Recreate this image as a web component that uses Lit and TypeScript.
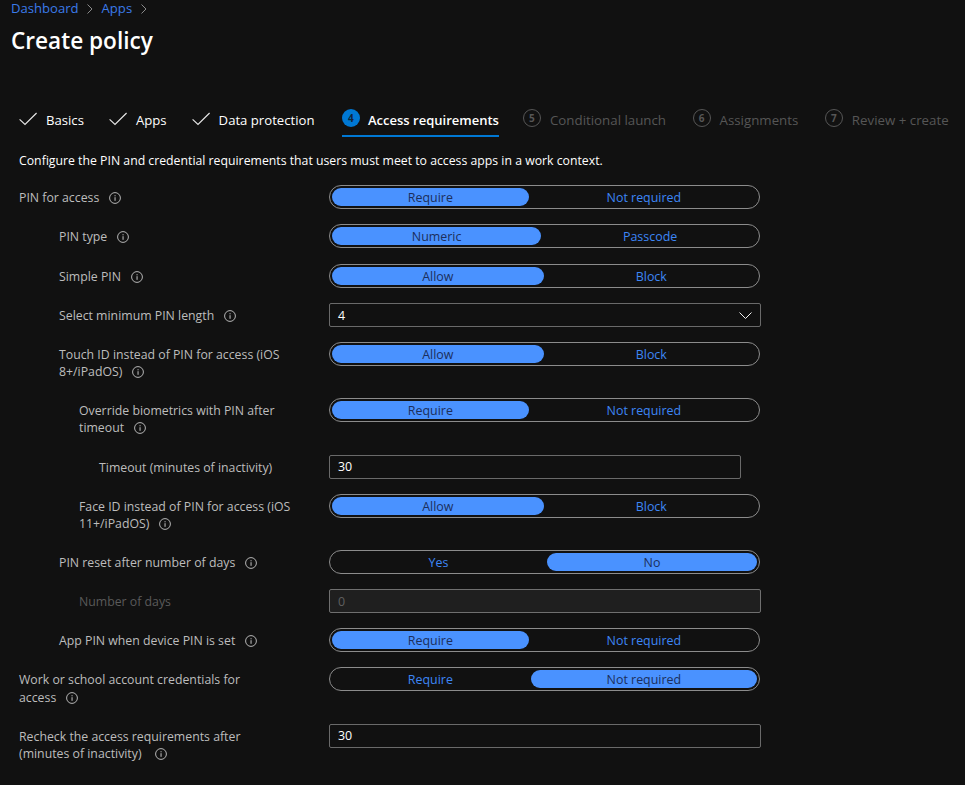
import { LitElement, html, css, svg } from "lit";
import { customElement } from "lit/decorators.js";
import { classMap } from "lit/directives/class-map.js";

type Row = {
  label: string;
  level: 0 | 1 | 2 | 3;
  kind: "toggle" | "select" | "input" | "disabled";
  options?: [string, string];
  selected?: number;
  value?: string;
  narrow?: boolean;
  wideIcon?: boolean;
  noIcon?: boolean;
  two?: boolean;
};

const REQ: [string, string] = ["Require", "Not required"];
const ALLOW: [string, string] = ["Allow", "Block"];

const rows: Row[] = [
  { label: "PIN for access", level: 0, kind: "toggle", options: REQ, selected: 0 },
  { label: "PIN type", level: 1, kind: "toggle", options: ["Numeric", "Passcode"], selected: 0 },
  { label: "Simple PIN", level: 1, kind: "toggle", options: ALLOW, selected: 0 },
  { label: "Select minimum PIN length", level: 1, kind: "select", value: "4" },
  { label: "Touch ID instead of PIN for access (iOS 8+/iPadOS)", level: 1, kind: "toggle", options: ALLOW, selected: 0, two: true },
  { label: "Override biometrics with PIN after timeout", level: 2, kind: "toggle", options: REQ, selected: 0, two: true },
  { label: "Timeout (minutes of inactivity)", level: 3, kind: "input", value: "30", narrow: true, noIcon: true },
  { label: "Face ID instead of PIN for access (iOS 11+/iPadOS)", level: 2, kind: "toggle", options: ALLOW, selected: 0, two: true },
  { label: "PIN reset after number of days", level: 1, kind: "toggle", options: ["Yes", "No"], selected: 1 },
  { label: "Number of days", level: 2, kind: "disabled", value: "0", noIcon: true },
  { label: "App PIN when device PIN is set", level: 1, kind: "toggle", options: REQ, selected: 0 },
  { label: "Work or school account credentials for access", level: 0, kind: "toggle", options: REQ, selected: 1, two: true },
  { label: "Recheck the access requirements after (minutes of inactivity)", level: 0, kind: "input", value: "30", wideIcon: true, two: true },
];

type Tab = { label: string; state: "done" | "active" | "todo"; n?: number };
const tabs: Tab[] = [
  { label: "Basics", state: "done" },
  { label: "Apps", state: "done" },
  { label: "Data protection", state: "done" },
  { label: "Access requirements", state: "active", n: 4 },
  { label: "Conditional launch", state: "todo", n: 5 },
  { label: "Assignments", state: "todo", n: 6 },
  { label: "Review + create", state: "todo", n: 7 },
];

const infoIcon = svg`<circle cx="6" cy="6" r="5.4" fill="none" stroke="currentColor" stroke-width="1"/><rect x="5.5" y="5.2" width="1.1" height="3.6" fill="currentColor"/><rect x="5.5" y="3.2" width="1.1" height="1.1" fill="currentColor"/>`;
const checkIcon = svg`<path d="M0.6 7.4 L6 12.4 L17.6 1" fill="none" stroke="currentColor" stroke-width="1.2"/>`;
const chevron = svg`<path d="M0.5 0.5 L6.5 6.5 L12.5 0.5" fill="none" stroke="currentColor" stroke-width="1"/>`;
const crumbChevron = svg`<path d="M0.5 0.5 L5 5 L0.5 9.5" fill="none" stroke="currentColor" stroke-width="1"/>`;

@customElement("app-root")
export class AppRoot extends LitElement {
  static styles = css`
    :host {
      display: block;
      height: 785px;
      overflow: hidden;
      background: #111111;
      color: #ffffff;
      font-family: "Open Sans", "Noto Sans", sans-serif;
    }
    .crumbs {
      display: flex;
      align-items: center;
      gap: 8.5px;
      height: 16px;
      padding-left: 11px;
      font-size: 13.1px;
      line-height: 16px;
      color: #3b7bea;
    }
    .crumbs svg {
      width: 6px;
      height: 10px;
      color: #8a8a8a;
      margin-top: 1px;
    }
    h1 {
      margin: 9px 0 0;
      padding-left: 11px;
      font-size: 22.6px;
      line-height: 32px;
      font-weight: 600;
      color: #ffffff;
    }
    .tabs {
      display: flex;
      margin-top: 53px;
      padding-left: 19px;
      height: 27px;
      white-space: nowrap;
    }
    .tab {
      display: flex;
      gap: 9px;
      height: 27px;
      box-sizing: border-box;
      font-size: 13.15px;
      line-height: 20px;
      margin-right: 25px;
    }
    .tab.done svg {
      width: 18px;
      height: 14px;
      margin-top: 2px;
      color: #e6e6e6;
    }
    .tab.active {
      margin-left: 2.5px;
      margin-right: 24px;
      border-bottom: 2px solid #0078d4;
      gap: 8px;
    }
    .tab.active .text {
      font-weight: 600;
      font-size: 13.02px;
    }
    .tab.todo {
      color: #565656;
      font-size: 13.3px;
      margin-right: 26.5px;
    }
    .badge {
      box-sizing: border-box;
      width: 18px;
      height: 18px;
      border-radius: 50%;
      display: flex;
      align-items: center;
      justify-content: center;
      font-size: 10px;
      line-height: 18px;
      font-weight: 700;
      margin-top: -1px;
    }
    .active .badge {
      background: #0078d4;
      color: #10243a;
    }
    .todo .badge {
      border: 1px solid #565656;
      color: #565656;
    }
    .desc {
      margin: 15px 0 0 19px;
      font-size: 12.27px;
      line-height: 17px;
      color: #ffffff;
      white-space: nowrap;
    }
    .form {
      display: flex;
      flex-direction: column;
      gap: 15px;
      margin-top: 16.35px;
      padding-left: 19px;
      width: 742px;
      box-sizing: border-box;
    }
    .row {
      display: grid;
      grid-template-columns: 310px 432px;
      align-items: start;
      flex: none;
      height: 24.1px;
    }
    .row.two {
      height: 41.4px;
    }
    .label {
      box-sizing: border-box;
      padding-top: 4px;
      font-size: 12.3px;
      line-height: 17.3px;
      color: #bdbdbd;
    }
    .label .inner {
      max-width: 225px;
    }
    .l1 { padding-left: 40px; }
    .l2 { padding-left: 60px; }
    .l3 { padding-left: 80px; }
    .l3 .inner { max-width: none; }
    .label.off { color: #5a5a5a; }
    .info {
      display: inline-block;
      width: 12px;
      height: 12px;
      margin-left: 9.5px;
      vertical-align: -2px;
      color: #b5b5b5;
    }
    .info.wide { margin-left: 13px; }
    .toggle {
      display: flex;
      gap: 2px;
      box-sizing: border-box;
      width: 431px;
      height: 24px;
      padding: 2px;
      border: 1px solid #8c8c8c;
      border-radius: 12px;
    }
    .seg {
      flex: 1 1 auto;
      height: 18px;
      border-radius: 9px;
      text-align: center;
      font-size: 12.44px;
      line-height: 20px;
      color: #3d86f5;
    }
    .seg.on {
      background: #4a92ff;
      color: #1c2f5c;
    }
    .field {
      display: flex;
      align-items: center;
      justify-content: space-between;
      box-sizing: border-box;
      width: 432px;
      height: 24px;
      padding: 0 8px;
      border: 1px solid #6a6a6a;
      border-radius: 2px;
      font-size: 12.44px;
      color: #ffffff;
    }
    .field.pad { padding-top: 1px; }
    .field.narrow { width: 412px; }
    .field.off {
      background: #1f1f1f;
      color: #5f5f5f;
      border-color: #6f6f6f;
    }
    .field svg {
      width: 13px;
      height: 7px;
      color: #f0f0f0;
    }
  `;

  private control(r: Row) {
    if (r.kind === "toggle") {
      return html`<div class="toggle">
        ${r.options!.map(
          (o, i) => html`<div class=${classMap({ seg: true, on: i === r.selected })}>${o}</div>`
        )}
      </div>`;
    }
    return html`<div
      class=${classMap({
        field: true,
        narrow: !!r.narrow,
        off: r.kind === "disabled",
        pad: r.kind !== "input",
      })}
    >
      <span>${r.value}</span>
      ${r.kind === "select" ? html`<svg viewBox="0 0 13 7">${chevron}</svg>` : ""}
    </div>`;
  }

  render() {
    return html`
      <nav class="crumbs">
        <span>Dashboard</span><svg viewBox="0 0 6 10">${crumbChevron}</svg>
        <span>Apps</span><svg viewBox="0 0 6 10">${crumbChevron}</svg>
      </nav>
      <h1>Create policy</h1>
      <div class="tabs">
        ${tabs.map(
          (t) => html`<div class="tab ${t.state}">
            ${t.state === "done"
              ? html`<svg viewBox="0 0 18 14">${checkIcon}</svg>`
              : html`<span class="badge">${t.n}</span>`}
            <span class="text">${t.label}</span>
          </div>`
        )}
      </div>
      <p class="desc">
        Configure the PIN and credential requirements that users must meet to access apps in a work context.
      </p>
      <div class="form">
        ${rows.map(
          (r) => html`<div class=${classMap({ row: true, two: !!r.two })}>
            <div class="label l${r.level} ${r.kind === "disabled" ? "off" : ""}">
              <div class="inner">
                ${r.label}${r.noIcon
                  ? ""
                  : html`<svg class=${classMap({ info: true, wide: !!r.wideIcon })} viewBox="0 0 12 12">${infoIcon}</svg>`}
              </div>
            </div>
            ${this.control(r)}
          </div>`
        )}
      </div>
    `;
  }
}
